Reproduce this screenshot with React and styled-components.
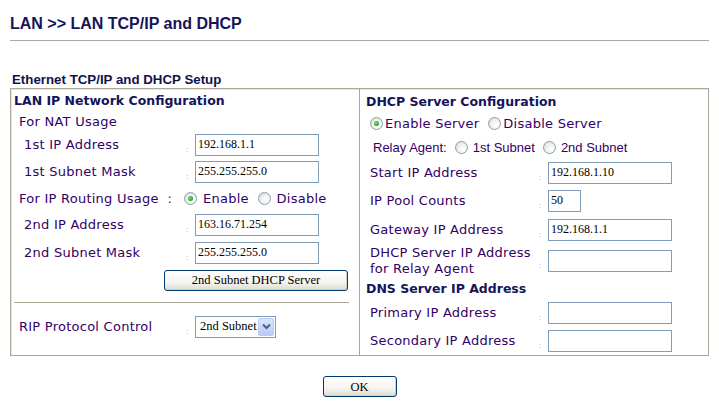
import React from 'react';
import styled, { createGlobalStyle } from 'styled-components';

const GlobalStyle = createGlobalStyle`
    html, body {
        margin: 0;
        padding: 0;
        background: #ffffff;
    }
`;

const Page = styled.div`
    width: 719px;
    height: 415px;
    padding: 0 10px;
    box-sizing: border-box;
    font-family: "DejaVu Sans", Verdana, sans-serif;
`;

const Title = styled.h1`
    margin: 0;
    height: 41px;
    padding-top: 15px;
    box-sizing: border-box;
    border-bottom: 1px solid #a8a8a8;
    font-family: "Liberation Sans", Arial, sans-serif;
    font-size: 16px;
    font-weight: bold;
    color: #14145a;
`;

const Caption = styled.div`
    margin-top: 30px;
    height: 17px;
    padding-left: 2px;
    font-family: "Liberation Sans", Arial, sans-serif;
    font-size: 13.3px;
    font-weight: bold;
    color: #12124a;
    line-height: 17px;
`;

const Panel = styled.div`
    display: grid;
    grid-template-columns: 348px 1fr;
    height: 268px;
    border: 1px solid #aca899;
    box-shadow: inset 1px 1px 0 #e8e6dc;
    box-sizing: border-box;
`;

const Column = styled.div`
    display: flex;
    flex-direction: column;
    padding-top: 1px;
    border-left: ${({ divided }) => divided ? '1px solid #aca899' : 'none'};
`;

const Heading = styled.div`
    height: ${({ h }) => h || 21}px;
    display: flex;
    align-items: center;
    padding-left: ${({ indent }) => indent || 3}px;
    font-size: 12.5px;
    font-weight: bold;
    color: #14145a;
`;

const Row = styled.div`
    display: grid;
    grid-template-columns: ${({ labelWidth }) => labelWidth}px 9px 1fr;
    align-items: center;
    height: ${({ h }) => h}px;
    padding-left: ${({ indent }) => indent}px;
`;

const Label = styled.div`
    font-size: 13px;
    letter-spacing: 0.25px;
    color: #330066;
    line-height: 16px;
    white-space: nowrap;
`;

const Colon = styled.span`
    align-self: center;
    padding-top: 9px;
    font-family: "Liberation Sans", Arial, sans-serif;
    font-size: 8px;
    color: #9a9a9a;
`;

const TextBox = styled.div`
    width: ${({ w }) => w || 124}px;
    height: 22px;
    box-sizing: border-box;
    border: 1px solid #7f9db9;
    padding: 1px 2px;
    font-family: "Liberation Serif", "Times New Roman", serif;
    font-size: 12px;
    line-height: 17px;
    color: #000000;
    background: #ffffff;
`;

const Line = styled.div`
    display: flex;
    align-items: center;
    gap: ${({ gap }) => gap || 0}px;
    height: ${({ h }) => h}px;
    padding-left: ${({ indent }) => indent}px;
    font-family: ${({ arial }) => arial ? '"Liberation Sans", Arial, sans-serif' : 'inherit'};
    font-size: 13px;
    letter-spacing: ${({ arial }) => arial ? '0' : '0.25px'};
    color: #330066;
    white-space: nowrap;
`;

const Choice = styled.span`
    display: inline-flex;
    align-items: center;
    gap: ${({ space }) => space}px;
`;

const RadioMark = styled.span`
    display: inline-block;
    position: relative;
    width: 13px;
    height: 13px;
    box-sizing: border-box;
    border-radius: 50%;
    border: 1px solid #8a9bad;
    background: radial-gradient(circle at 65% 65%, #ffffff 0%, #f2f2ee 45%, #d6d6cc 100%);

    &::after {
        content: '';
        display: ${({ checked }) => checked ? 'block' : 'none'};
        position: absolute;
        left: 3px;
        top: 3px;
        width: 5px;
        height: 5px;
        border-radius: 50%;
        background: radial-gradient(circle at 40% 40%, #7be07b 0%, #21a121 70%);
    }
`;

const Radio = ({ checked, children, space = 6 }) => (
    <Choice space={space}>
        <RadioMark checked={checked} />
        {children}
    </Choice>
);

const RoutingLabel = styled.span`
    width: 165px;
`;

const ButtonRow = styled.div`
    height: ${({ h }) => h}px;
    display: flex;
    align-items: center;
    padding-left: ${({ indent }) => indent || 0}px;
`;

const XpButton = styled.button`
    width: ${({ w }) => w}px;
    height: 21px;
    padding: 0;
    border: 1px solid #003c74;
    border-radius: 3px;
    background: linear-gradient(#ffffff 0%, #f5f4ef 60%, #dedbcf 100%);
    box-shadow: inset -1px -1px 0 #d4d0c4;
    font-family: "Liberation Serif", "Times New Roman", serif;
    font-size: 12.5px;
    color: #000000;
    line-height: 18px;
`;

const Separator = styled.div`
    height: 1px;
    margin: ${({ m }) => m};
    background: #aca899;
`;

const SelectBox = styled.div`
    display: flex;
    width: 81px;
    height: 22px;
    box-sizing: border-box;
    border: 1px solid #7f9db9;
    padding: 1px;
    background: #ffffff;
`;

const SelectValue = styled.span`
    flex: 1;
    padding-left: 3px;
    font-family: "Liberation Serif", "Times New Roman", serif;
    font-size: 12.5px;
    line-height: 17px;
    color: #000000;
`;

const SelectArrow = styled.span`
    display: flex;
    align-items: center;
    justify-content: center;
    width: 16px;
    border: 1px solid #b8cbf2;
    border-radius: 2px;
    box-sizing: border-box;
    background: linear-gradient(#dbe6fd, #b6cbf5);
`;

const Footer = styled.div`
    padding-top: 20px;
    display: flex;
    justify-content: center;
`;

const Field = ({ label, value, w, labelWidth, indent, h = 27 }) => (
    <Row labelWidth={labelWidth} indent={indent} h={h}>
        <Label>{label}</Label>
        <Colon>:</Colon>
        <TextBox w={w}>{value}</TextBox>
    </Row>
);

const App = () => (
    <Page>
        <GlobalStyle />
        <Title>LAN &gt;&gt; LAN TCP/IP and DHCP</Title>
        <Caption>Ethernet TCP/IP and DHCP Setup</Caption>
        <Panel>
            <Column>
                <Heading>LAN IP Network Configuration</Heading>
                <Line h={20} indent={8}>For NAT Usage</Line>
                <Field label="1st IP Address" value="192.168.1.1" labelWidth={162} indent={13} />
                <Field label="1st Subnet Mask" value="255.255.255.0" labelWidth={162} indent={13} />
                <Line h={26} indent={8}>
                    <RoutingLabel>For IP Routing Usage&nbsp;&nbsp;:</RoutingLabel>
                    <Radio checked>Enable&nbsp;&nbsp;</Radio>
                    <Radio>Disable</Radio>
                </Line>
                <Field label="2nd IP Address" value="163.16.71.254" labelWidth={162} indent={13} h={28} />
                <Field label="2nd Subnet Mask" value="255.255.255.0" labelWidth={162} indent={13} h={27} />
                <ButtonRow h={28} indent={153}>
                    <XpButton w={184}>2nd Subnet DHCP Server</XpButton>
                </ButtonRow>
                <Separator m="8px 10px 10px 3px" />
                <Row labelWidth={167} indent={8} h={27}>
                    <Label>RIP Protocol Control</Label>
                    <Colon>:</Colon>
                    <SelectBox>
                        <SelectValue>2nd Subnet</SelectValue>
                        <SelectArrow>
                            <svg width="9" height="7" viewBox="0 0 9 7">
                                <path d="M1 1.5 L4.5 5 L8 1.5" fill="none" stroke="#4d6185" strokeWidth="2" />
                            </svg>
                        </SelectArrow>
                    </SelectBox>
                </Row>
            </Column>
            <Column divided>
                <Heading indent={6} h={22}>DHCP Server Configuration</Heading>
                <Line h={23} indent={10} gap={9}>
                    <Radio checked space={2}>Enable Server</Radio>
                    <Radio space={2}>Disable Server</Radio>
                </Line>
                <Line h={24} indent={13} gap={8} arial>
                    <span>Relay Agent:</span>
                    <Radio space={5}>1st Subnet</Radio>
                    <Radio space={5}>2nd Subnet</Radio>
                </Line>
                <Field label="Start IP Address" value="192.168.1.10" labelWidth={169} indent={10} h={28} />
                <Field label="IP Pool Counts" value="50" w={33} labelWidth={169} indent={10} h={28} />
                <Field label="Gateway IP Address" value="192.168.1.1" labelWidth={169} indent={10} h={29} />
                <Row labelWidth={169} indent={10} h={34}>
                    <Label>DHCP Server IP Address<br />for Relay Agent</Label>
                    <Colon>:</Colon>
                    <TextBox />
                </Row>
                <Heading indent={6} h={21}>DNS Server IP Address</Heading>
                <Field label="Primary IP Address" value="" labelWidth={169} indent={10} h={28} />
                <Field label="Secondary IP Address" value="" labelWidth={169} indent={10} h={28} />
            </Column>
        </Panel>
        <Footer>
            <XpButton w={74}>OK</XpButton>
        </Footer>
    </Page>
);

export default App;
